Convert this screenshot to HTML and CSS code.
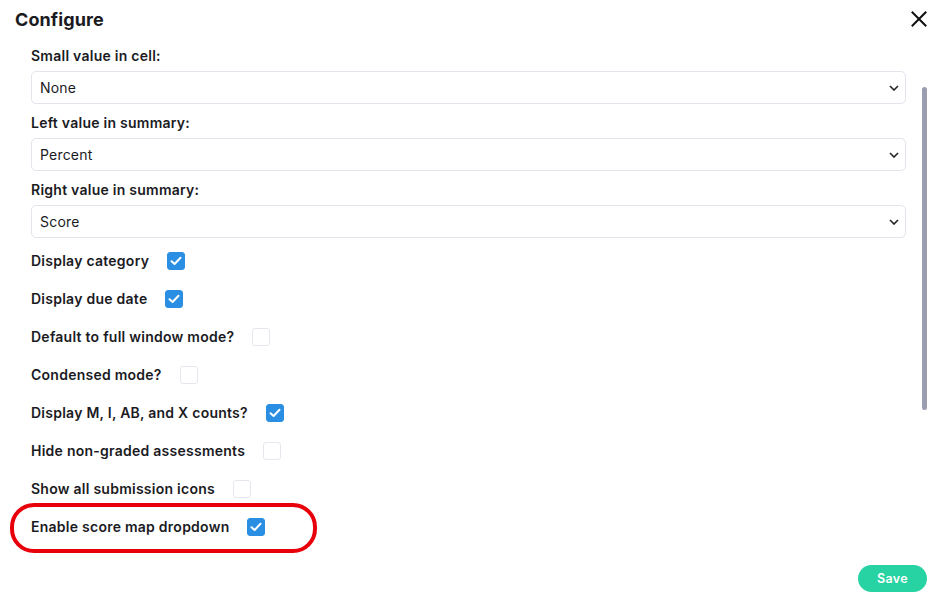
FILE: index.html
```html
<!DOCTYPE html>
<html>
<head>
<meta charset="utf-8">
<link rel="stylesheet" href="styles.css">
</head>
<body>
<div class="modal">
  <div class="header">
    <h1 class="title">Configure</h1>
    <button class="close" aria-label="Close">
      <svg width="16" height="16" viewBox="0 0 16 16"><path d="M1.5 1.5 L14.5 14.5 M14.5 1.5 L1.5 14.5" stroke="#111" stroke-width="2" stroke-linecap="square"/></svg>
    </button>
  </div>
  <div class="body">
    <div class="content">
      <div class="field">
        <div class="label">Small value in cell:</div>
        <div class="select"><span>None</span><svg class="chev" width="10" height="6" viewBox="0 0 10 6"><path d="M1 1 L5 5 L9 1" fill="none" stroke="#222" stroke-width="1.6"/></svg></div>
      </div>
      <div class="field">
        <div class="label">Left value in summary:</div>
        <div class="select"><span>Percent</span><svg class="chev" width="10" height="6" viewBox="0 0 10 6"><path d="M1 1 L5 5 L9 1" fill="none" stroke="#222" stroke-width="1.6"/></svg></div>
      </div>
      <div class="field">
        <div class="label">Right value in summary:</div>
        <div class="select"><span>Score</span><svg class="chev" width="10" height="6" viewBox="0 0 10 6"><path d="M1 1 L5 5 L9 1" fill="none" stroke="#222" stroke-width="1.6"/></svg></div>
      </div>
      <div class="check-row"><span class="label">Display category</span><span class="box on"><svg width="12" height="10" viewBox="0 0 12 10"><path d="M1.5 5.2 L4.6 8 L10.5 1.8" fill="none" stroke="#fff" stroke-width="2" stroke-linecap="round" stroke-linejoin="round"/></svg></span></div>
      <div class="check-row"><span class="label">Display due date</span><span class="box on"><svg width="12" height="10" viewBox="0 0 12 10"><path d="M1.5 5.2 L4.6 8 L10.5 1.8" fill="none" stroke="#fff" stroke-width="2" stroke-linecap="round" stroke-linejoin="round"/></svg></span></div>
      <div class="check-row"><span class="label">Default to full window mode?</span><span class="box"></span></div>
      <div class="check-row"><span class="label">Condensed mode?</span><span class="box"></span></div>
      <div class="check-row"><span class="label">Display M, I, AB, and X counts?</span><span class="box on"><svg width="12" height="10" viewBox="0 0 12 10"><path d="M1.5 5.2 L4.6 8 L10.5 1.8" fill="none" stroke="#fff" stroke-width="2" stroke-linecap="round" stroke-linejoin="round"/></svg></span></div>
      <div class="check-row"><span class="label">Hide non-graded assessments</span><span class="box"></span></div>
      <div class="check-row"><span class="label">Show all submission icons</span><span class="box"></span></div>
      <div class="check-row highlighted"><span class="label">Enable score map dropdown</span><span class="box on"><svg width="12" height="10" viewBox="0 0 12 10"><path d="M1.5 5.2 L4.6 8 L10.5 1.8" fill="none" stroke="#fff" stroke-width="2" stroke-linecap="round" stroke-linejoin="round"/></svg></span><span class="ring"></span></div>
    </div>
    <div class="scrollbar"></div>
  </div>
  <div class="footer">
    <button class="save">Save</button>
  </div>
</div>
</body>
</html>
```
FILE: styles.css
```css
* { box-sizing: border-box; }
body {
  margin: 0;
  background: #fff;
  font-family: "Inter", "Open Sans", sans-serif;
  color: #1b1b1f;
}
.modal {
  width: 944px;
  height: 609px;
  display: flex;
  flex-direction: column;
}
.header {
  display: flex;
  justify-content: space-between;
  align-items: center;
  height: 40px;
  padding: 0 17px 2px 15px;
}
.title {
  margin: 0;
  font-size: 18px;
  font-weight: 700;
  letter-spacing: 0.1px;
}
.close {
  border: 0;
  background: none;
  padding: 0;
  width: 16px;
  height: 16px;
  display: flex;
}
.body {
  display: flex;
  padding-left: 31px;
}
.content {
  width: 875px;
  display: flex;
  flex-direction: column;
}
.field {
  display: flex;
  flex-direction: column;
  gap: 5px;
  margin-bottom: 9px;
}
.field:first-child { margin-top: 6px; }
.label {
  font-size: 14px;
  font-weight: 600;
  line-height: 20px;
  letter-spacing: 0.25px;
  color: #1b1b1f;
}
.select {
  height: 33px;
  border: 1px solid #e3e4ec;
  border-radius: 5px;
  display: flex;
  align-items: center;
  justify-content: space-between;
  padding: 0 6px 0 8px;
  font-size: 14px;
  letter-spacing: 0.2px;
  color: #1b1b1f;
}
.chev { margin-top: 1px; }
.check-row {
  position: relative;
  height: 38px;
  display: flex;
  align-items: center;
  gap: 18px;
}
.check-row:nth-child(4) { margin-top: -5px; }
.box {
  width: 18px;
  height: 18px;
  border-radius: 3px;
  border: 1.5px solid #e6e7ee;
  display: flex;
  align-items: center;
  justify-content: center;
  background: #fff;
}
.box.on {
  background: #2a8fe3;
  border-color: #2a8fe3;
}
.ring {
  position: absolute;
  left: -21px;
  top: -5px;
  width: 307px;
  height: 50px;
  border: 4px solid #e8000b;
  border-radius: 24px;
}
.scrollbar {
  width: 5px;
  height: 323px;
  margin-top: 47px;
  margin-left: 16px;
  background: #9b9db0;
  border-radius: 3px;
}
.footer {
  display: flex;
  justify-content: flex-end;
  padding: 0 17px 0 0;
  margin-top: auto;
  margin-bottom: 17px;
}
.save {
  width: 69px;
  height: 27px;
  border: 0;
  border-radius: 14px;
  background: #27d3a2;
  color: #fff;
  font-family: "Inter", "Open Sans", sans-serif;
  font-weight: 600;
  font-size: 12.5px;
  letter-spacing: 0.3px;
}
```
